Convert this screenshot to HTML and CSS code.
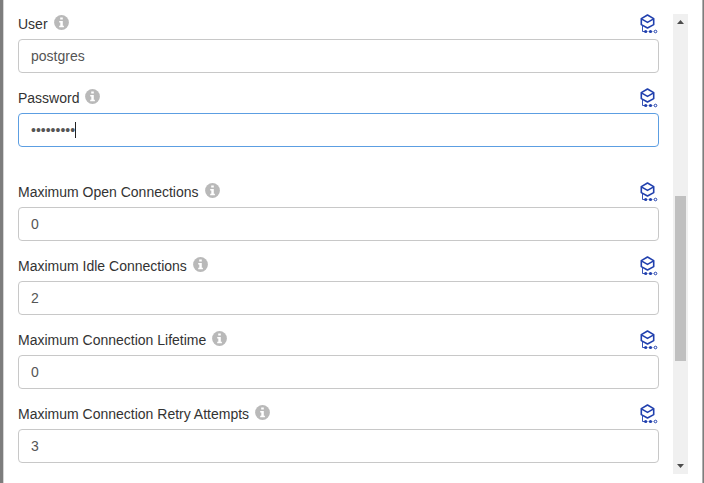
FILE: index.html
```
<!DOCTYPE html>
<html lang="en">
<head>
<meta charset="utf-8">
<title>Connection settings</title>
<link rel="stylesheet" href="styles.css">
</head>
<body>
<svg class="defs" aria-hidden="true">
  <symbol id="info" viewBox="0 0 15 15">
    <circle cx="7.5" cy="7.5" r="7.4" fill="#b9b9b9"/>
    <path d="M6.200 2.600h2.600v2H6.200zM5.200 6h3.600v4.700h1.100v1.500H5.200v-1.500h1.100V7.500H5.200z" fill="#fff"/>
  </symbol>
  <symbol id="cube" viewBox="0 0 19 20">
    <g fill="none" stroke="#2140ae" stroke-linejoin="round">
      <path d="M7.500 1l6.200 3.600v6l-6.200 3.400-6.200-3.400v-6z" stroke-width="1.600"/>
      <path d="M1.800 5.100l5.700 3.300 5.700-3.300" stroke-width="1.600"/>
      <path d="M2.500 11.500v6h3" stroke-width=".9"/>
      <circle cx="15.500" cy="17.500" r="1.300" fill="#fff" stroke-width="1"/>
    </g>
    <circle cx="5.700" cy="17.500" r="1.600" fill="#2140ae"/>
    <circle cx="10.500" cy="17.500" r="1.600" fill="#2140ae"/>
    <path d="M7 17.500h7" stroke="#2140ae" stroke-opacity=".35" stroke-width=".7"/>
  </symbol>
</svg>
<div class="dialog">
  <form class="fields">
    <div class="field">
      <div class="head"><label>User</label><svg class="info"><use href="#info"/></svg><svg class="cube"><use href="#cube"/></svg></div>
      <div class="input">postgres</div>
    </div>
    <div class="field field-password">
      <div class="head"><label>Password</label><svg class="info"><use href="#info"/></svg><svg class="cube"><use href="#cube"/></svg></div>
      <div class="input focused"><span>•••••••••</span><span class="caret"></span></div>
    </div>
    <div class="field">
      <div class="head"><label>Maximum Open Connections</label><svg class="info"><use href="#info"/></svg><svg class="cube"><use href="#cube"/></svg></div>
      <div class="input">0</div>
    </div>
    <div class="field">
      <div class="head"><label>Maximum Idle Connections</label><svg class="info"><use href="#info"/></svg><svg class="cube"><use href="#cube"/></svg></div>
      <div class="input">2</div>
    </div>
    <div class="field">
      <div class="head"><label>Maximum Connection Lifetime</label><svg class="info"><use href="#info"/></svg><svg class="cube"><use href="#cube"/></svg></div>
      <div class="input">0</div>
    </div>
    <div class="field">
      <div class="head"><label>Maximum Connection Retry Attempts</label><svg class="info"><use href="#info"/></svg><svg class="cube"><use href="#cube"/></svg></div>
      <div class="input">3</div>
    </div>
  </form>
  <div class="scrollbar">
    <svg class="arrow" viewBox="0 0 15 15"><path d="M4 10h7L7.500 6z"/></svg>
    <div class="thumb"></div>
    <svg class="arrow arrow-down" viewBox="0 0 15 15"><path d="M4 5h7L7.500 9z"/></svg>
  </div>
</div>
</body>
</html>
```
FILE: styles.css
```
* { box-sizing: border-box; }
body {
  margin: 0;
  height: 483px;
  overflow: hidden;
  background: #fff;
  font: 14px/20px "Liberation Sans", Arial, sans-serif;
  color: #333;
}
.defs { display: none; }
.dialog {
  display: flex;
  height: 483px;
  padding: 14px 14px 9px 15px;
  border-left: 3px solid #7d7d7d;
  border-right: 1px solid #7d7d7d;
  box-shadow: inset 1px 0 #d5d5d5, inset -1px 0 #b0b0b0;
}
.fields { width: 641px; margin: 0; }
.field { margin-bottom: 15px; }
.field-password { margin-bottom: 35px; }
.head { display: flex; height: 25px; }
.info { width: 15px; height: 15px; margin: 1px 0 0 6px; }
.cube { width: 19px; height: 20px; margin-left: auto; }
.input {
  display: flex;
  align-items: center;
  height: 34px;
  padding: 0 12px;
  border: 1px solid #c8c8c8;
  border-radius: 4px;
  color: #555;
}
.focused { border-color: #5c9ee2; }
.caret { width: 1px; height: 16px; background: #222; }
.scrollbar {
  display: flex;
  flex-direction: column;
  width: 15px;
  height: 460px;
  margin-left: 14px;
  background: #f0f0f0;
}
.arrow { width: 15px; height: 15px; fill: #4c4c4c; }
.arrow-down { margin-top: auto; }
.thumb { width: 11px; height: 165px; margin: 167px 2px 0; background: #c0c0c0; }
```
